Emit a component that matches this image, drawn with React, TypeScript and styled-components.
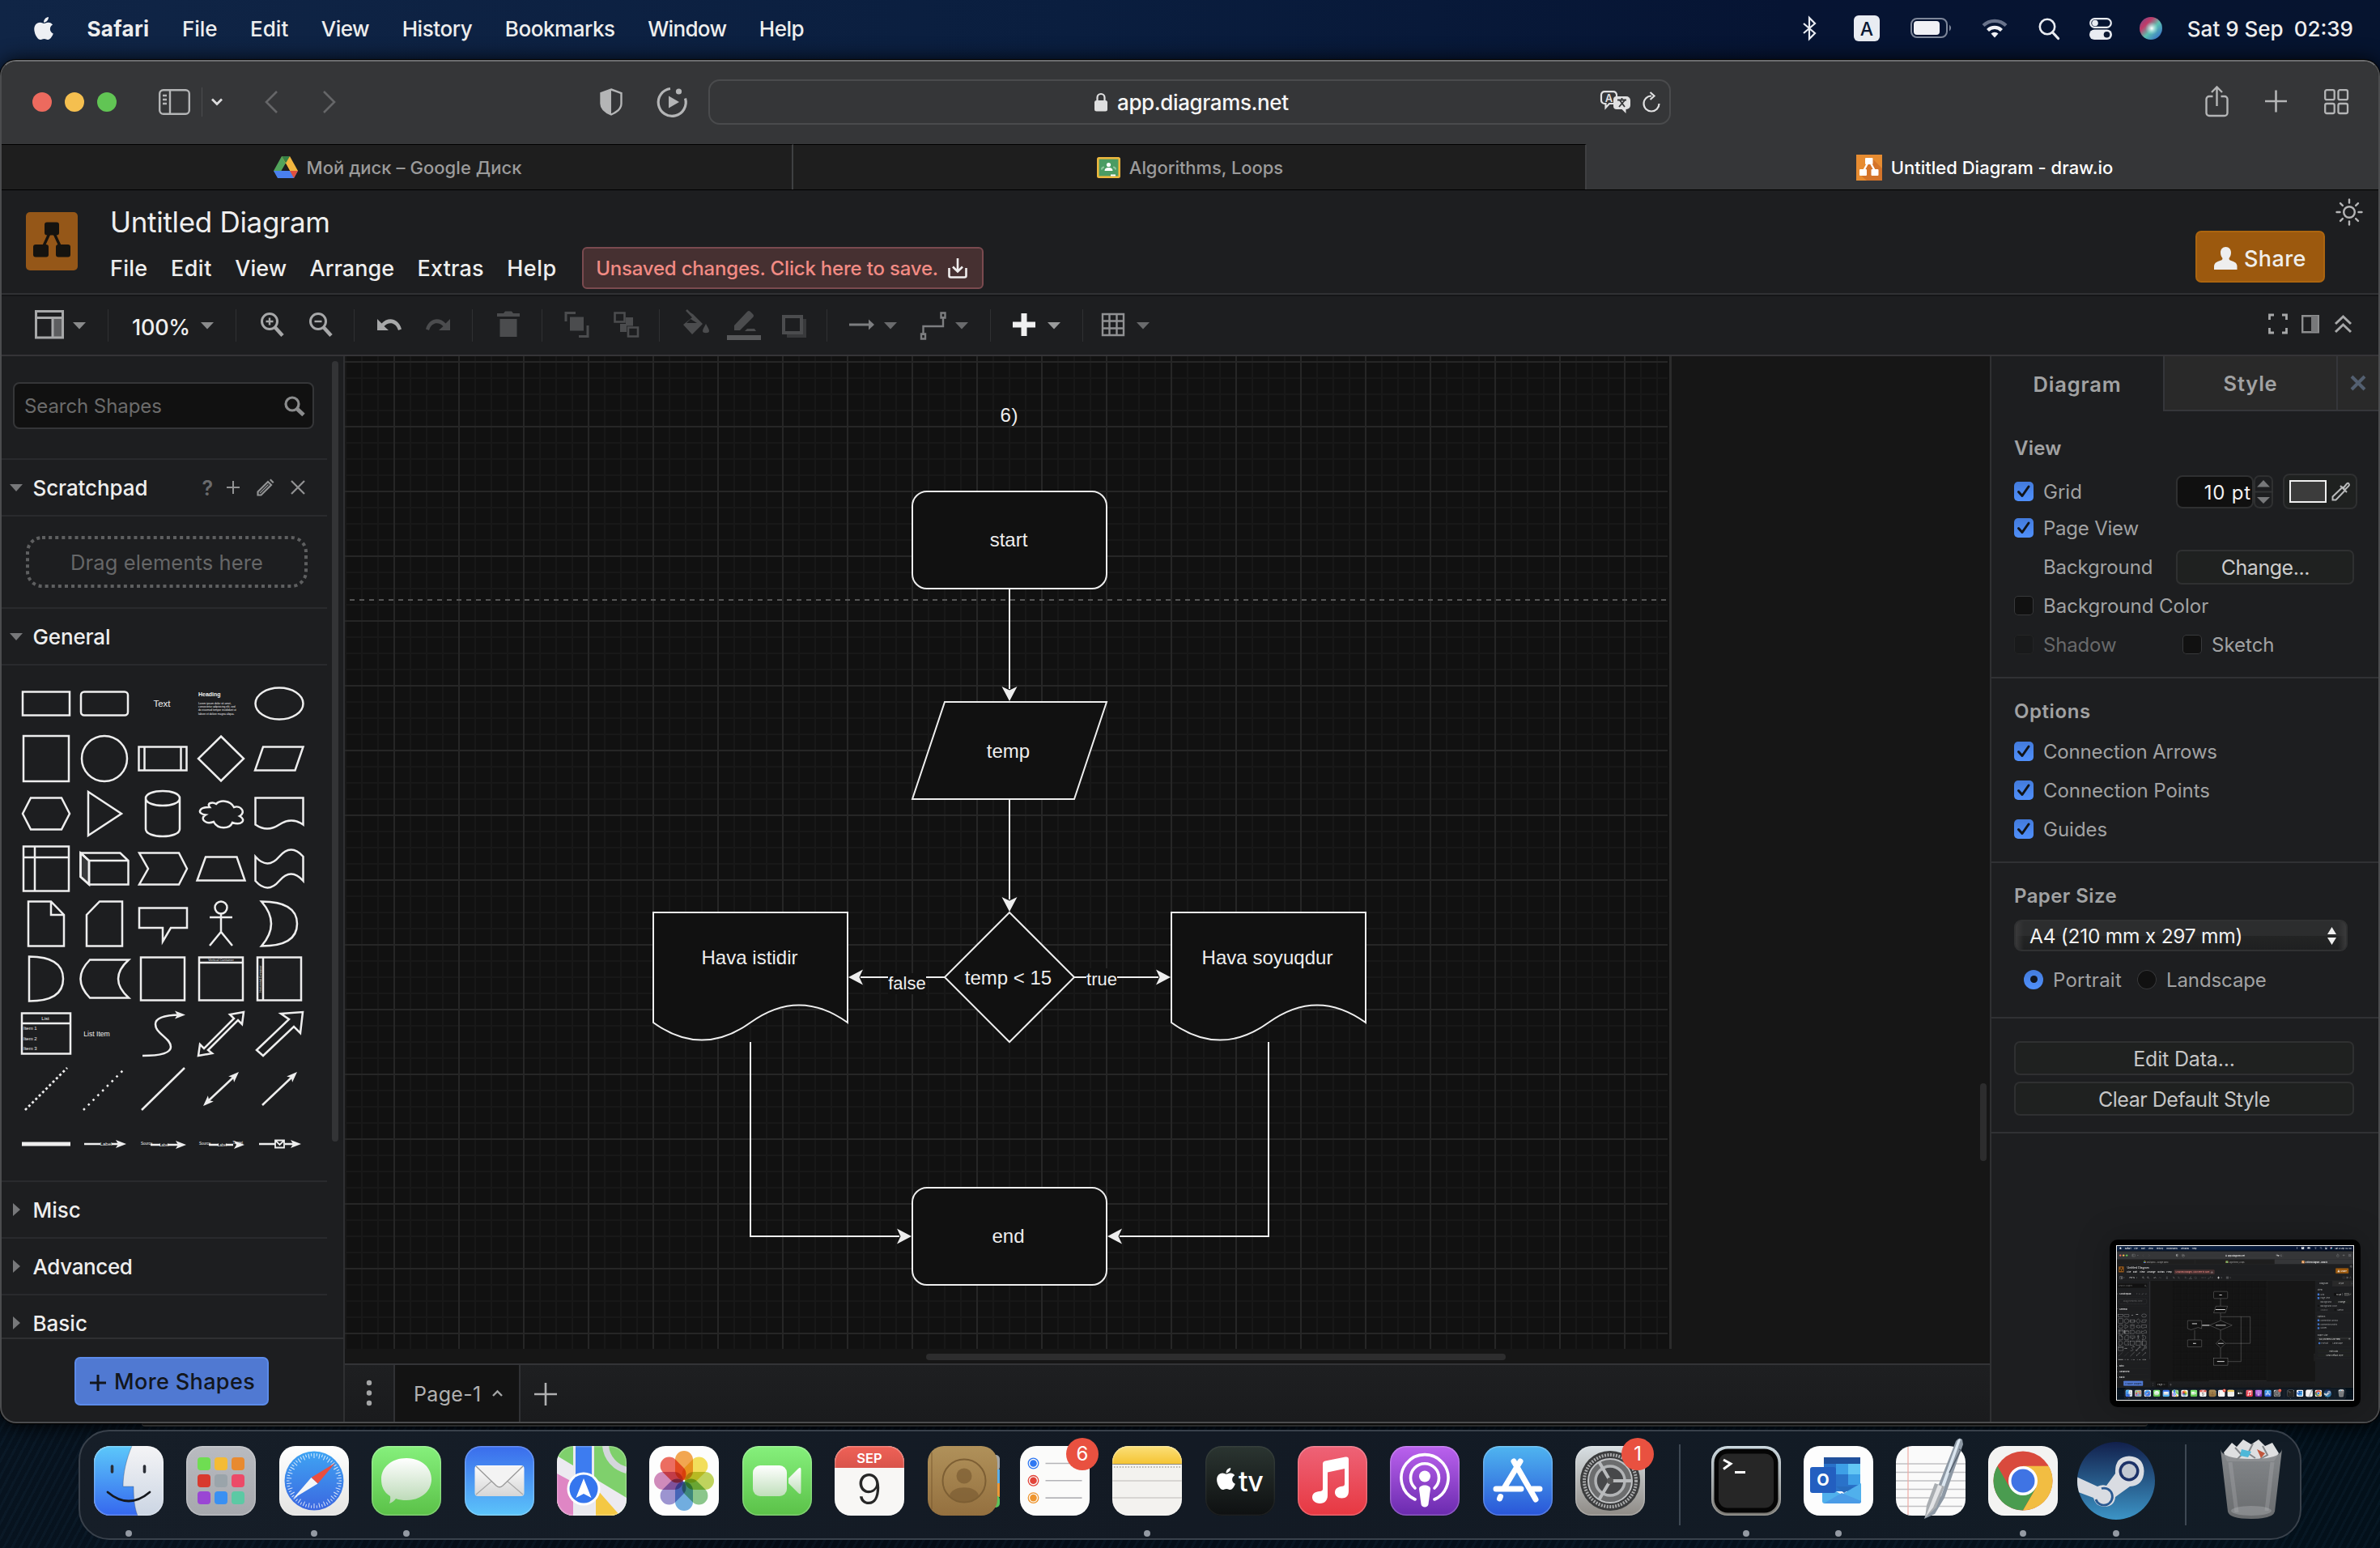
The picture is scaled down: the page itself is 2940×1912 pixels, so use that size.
import React, { useLayoutEffect, useRef } from "react";
import styled, { createGlobalStyle, css } from "styled-components";
import { FaApple } from "react-icons/fa";

const UI = `Inter, "Liberation Sans", sans-serif`;
const ARIAL = `"Liberation Sans", Arial, sans-serif`;
const INK = "#eeeeee";

const Global = createGlobalStyle`
  html, body { margin: 0; padding: 0; background: #03080f; overflow: hidden; }
  * { box-sizing: border-box; }
  svg { display: block; flex: none; overflow: visible; }
`;

/* ---------- text with tracking computed to a set width ---------- */

const LabelText = styled.span<{ $size: number; $color: string; $weight: number }>`
  display: inline-block;
  flex: none;
  white-space: pre;
  line-height: 1.2;
  padding-top: 2px;
  font-size: ${(p) => p.$size}px;
  font-weight: ${(p) => p.$weight};
  color: ${(p) => p.$color};
`;

function Label({ w, size = 26, color = INK, weight = 400, children }: {
  w: number; size?: number; color?: string; weight?: number; children: string;
}) {
  const ref = useRef<HTMLSpanElement>(null);
  useLayoutEffect(() => {
    const el = ref.current;
    if (!el) return;
    el.style.letterSpacing = "0px";
    el.style.letterSpacing = `${((w - el.offsetWidth) / children.length).toFixed(3)}px`;
  }, [w, children]);
  return <LabelText ref={ref} $size={size} $color={color} $weight={weight}>{children}</LabelText>;
}

const Slot = styled.div<{ $ml?: number; $auto?: boolean }>`
  flex: none;
  display: flex;
  align-items: center;
  margin-left: ${(p) => (p.$auto ? "auto" : `${p.$ml ?? 0}px`)};
`;

/* ---------- desktop ---------- */

const Screen = styled.div`
  position: relative;
  width: 2940px;
  height: 1912px;
  overflow: hidden;
  display: flex;
  flex-direction: column;
  font-family: ${UI};
  background:
    linear-gradient(90deg, #102546 0, #0a1e3f 45%, #061433 75%, #06142f 100%) top / 100% 110px no-repeat,
    repeating-linear-gradient(118deg, rgba(40, 80, 110, 0.1) 0 3px, transparent 3px 9px),
    linear-gradient(90deg, #07131f, #040a14 30%, #04101c 70%, #03101a);
`;

const MenuBarRoot = styled.div`
  height: 74px;
  flex: none;
  display: flex;
  align-items: center;
  padding: 0 33px 4px 38px;
`;
const MenuItems = styled.div`
  display: flex;
  gap: 40.5px;
  margin-left: 37.5px;
`;

function MenuBar() {
  const items: [string, number][] = [["File", 44], ["Edit", 47], ["View", 59], ["History", 87], ["Bookmarks", 136], ["Window", 97], ["Help", 55]];
  return (
    <MenuBarRoot>
      <FaApple size={32} color="#eef0f4" />
      <MenuItems>
        <Label w={77} weight={700}>Safari</Label>
        {items.map(([t, w]) => <Label key={t} w={w} weight={500}>{t}</Label>)}
      </MenuItems>
      <Slot $auto>
        <svg width="18" height="28" viewBox="0 0 18 28" fill="none" stroke="#e9ecf2" strokeWidth="2.2"><path d="M2 8l14 12-7 7V1l7 7L2 20" /></svg>
      </Slot>
      <Slot $ml={46}>
        <svg width="32" height="32" viewBox="0 0 32 32"><rect width="32" height="32" rx="6" fill="#e9ecf2" /><text x="16" y="24.500" fontSize="23" fontFamily="Inter" fontWeight="500" textAnchor="middle" fill="#0a1732">A</text></svg>
      </Slot>
      <Slot $ml={38}>
        <svg width="52" height="26" viewBox="0 0 52 26"><rect x="1" y="1" width="44" height="23" rx="7" fill="none" stroke="#7e879a" strokeWidth="2" /><rect x="4" y="4" width="32" height="17" rx="4" fill="#f0f1f5" /><path d="M48 8.500q4 4 0 8z" fill="#7e879a" /></svg>
      </Slot>
      <Slot $ml={36}>
        <svg width="32" height="26" viewBox="0 0 32 26" fill="none" strokeWidth="4.200">
          <path d="M2 9.500a20 20 0 0 1 28 0" stroke="#68728a" /><path d="M7.500 15.500a12 12 0 0 1 17 0" stroke="#f0f1f5" /><path d="M11.500 19.500a6.500 6.500 0 0 1 9 0L16 24.500z" fill="#f0f1f5" />
        </svg>
      </Slot>
      <Slot $ml={38}>
        <svg width="26" height="27" viewBox="0 0 26 27" fill="none" stroke="#e9ecf2" strokeWidth="2.600"><circle cx="11" cy="11" r="9.200" /><path d="M17.500 18l7 7.500" strokeWidth="3.200" strokeLinecap="round" /></svg>
      </Slot>
      <Slot $ml={37}>
        <svg width="28" height="27" viewBox="0 0 28 27"><rect x="1.200" y="1.200" width="25.600" height="10.600" rx="5.300" fill="none" stroke="#e9ecf2" strokeWidth="2.200" /><circle cx="7" cy="6.500" r="3.800" fill="#e9ecf2" /><rect y="14.500" width="28" height="12.500" rx="6.200" fill="#e9ecf2" /><circle cx="21.500" cy="20.700" r="3.800" fill="#0a1732" /></svg>
      </Slot>
      <Slot $ml={34}>
        <svg width="28" height="28" viewBox="0 0 28 28">
          <defs>
            <linearGradient id="siri" x1="0" y1="0" x2="1" y2="1"><stop offset="0" stopColor="#6b4a8c" /><stop offset=".3" stopColor="#c23a68" /><stop offset=".55" stopColor="#5cc1b0" /><stop offset="1" stopColor="#2d5bd0" /></linearGradient>
            <radialGradient id="siriGlow"><stop offset="0" stopColor="#fff" /><stop offset="1" stopColor="#9fe6e0" stopOpacity="0" /></radialGradient>
          </defs>
          <circle cx="14" cy="14" r="14" fill="url(#siri)" /><circle cx="15" cy="14" r="8" fill="url(#siriGlow)" />
        </svg>
      </Slot>
      <Slot $ml={31}><Label w={119} weight={500}>Sat 9 Sep</Label></Slot>
      <Slot $ml={13}><Label w={73} weight={500}>02:39</Label></Slot>
    </MenuBarRoot>
  );
}

/* ---------- browser window ---------- */

const BrowserWindow = styled.div`
  height: 1684px;
  flex: none;
  display: flex;
  flex-direction: column;
  border: 2px solid #4b4c4e;
  border-top-color: #6c6d6f;
  border-radius: 20px;
  overflow: hidden;
  background: #1d1e20;
  box-shadow: 0 0 0 1px #000, 0 2px 26px #000;
`;
const BackWindowEdge = styled.div`
  height: 4px;
  flex: none;
  margin: 0 287px 0 175px;
  background: #0c0c0c;
  border-bottom: 2px solid #2b2c2c;
  border-radius: 0 0 12px 12px;
`;
const BrowserBar = styled.div`
  height: 102px;
  flex: none;
  display: flex;
  align-items: center;
  padding-bottom: 2px;
  background: #353638;
`;
const Lights = styled.div`
  display: flex;
  gap: 16px;
  margin-left: 38px;
`;
const Light = styled.i<{ $c: string }>`
  width: 24px;
  height: 24px;
  border-radius: 50%;
  background: ${(p) => p.$c};
`;
const BarDivider = styled.i`
  width: 1px;
  height: 36px;
  margin-left: 14px;
  background: #4c4d4f;
`;
const AddressField = styled.div`
  width: 1189px;
  height: 56px;
  margin-left: 26px;
  padding: 0 11px 0 475px;
  display: flex;
  align-items: center;
  border: 2px solid #4a4b4d;
  border-radius: 14px;
`;
const TabStrip = styled.div`
  height: 57px;
  flex: none;
  display: grid;
  grid-template-columns: 978px 980px 1fr;
  border-bottom: 1px solid #000;
  background: #353638;
`;
const BrowserTab = styled.div<{ $active?: boolean }>`
  display: flex;
  align-items: center;
  justify-content: center;
  gap: 11px;
  ${(p) => p.$active
    ? css`padding: 1px 0 0 5px;`
    : css`background: #1e1e1e; border-top: 1px solid #000; border-right: 2px solid #3f4042; padding-left: 2px;`}
`;

function BrowserChrome() {
  const g = "#b4b5b6";
  return (
    <>
      <BrowserBar>
        <Lights><Light $c="#ed6a5e" /><Light $c="#f5bf4f" /><Light $c="#61c554" /></Lights>
        <Slot $ml={52}>
          <svg width="39" height="32" viewBox="0 0 39 32" fill="none" stroke={g} strokeWidth="2.400"><rect x="1.200" y="1.200" width="36.600" height="29.600" rx="4.500" /><path d="M14 1v30M5 8h5M5 13h5M5 18h5" /></svg>
        </Slot>
        <BarDivider />
        <Slot $ml={11}><svg width="14" height="10" viewBox="0 0 14 10" fill="none" stroke="#dcdcdd" strokeWidth="2.800"><path d="M1 1.500l6 6 6-6" /></svg></Slot>
        <Slot $ml={52}><svg width="16" height="28" viewBox="0 0 16 28" fill="none" stroke="#656668" strokeWidth="2.600"><path d="M15 1L2 14l13 13" /></svg></Slot>
        <Slot $ml={56}><svg width="16" height="28" viewBox="0 0 16 28" fill="none" stroke="#656668" strokeWidth="2.600"><path d="M1 1l13 13L1 27" /></svg></Slot>
        <Slot $ml={326}>
          <svg width="28" height="34" viewBox="0 0 28 34"><path d="M14 1.500L26.500 6v13c0 6-5.500 10.500-12.500 13.500C7 29.500 1.500 25 1.500 19V6z" fill="none" stroke={g} strokeWidth="2.400" /><path d="M14 1.500V32C7 29 1.500 25 1.500 19V6z" fill={g} /></svg>
        </Slot>
        <Slot $ml={42}>
          <svg width="38" height="38" viewBox="0 0 38 38" fill="none" stroke={g} strokeWidth="3.200"><path d="M17 2.500A17 17 0 1 0 35.500 14.500" /><path d="M15 11.500v15l13-7.500z" fill={g} stroke="none" /><circle cx="27.500" cy="6" r="3.600" fill={g} stroke="none" /></svg>
        </Slot>
        <AddressField>
          <svg width="16" height="24" viewBox="0 0 16 24"><path d="M3.500 11V6.500a4.500 4.500 0 0 1 9 0V11" fill="none" stroke="#dfdfe0" strokeWidth="2.200" /><rect y="10" width="16" height="13.500" rx="2.500" fill="#dfdfe0" /></svg>
          <Slot $ml={12}><Label w={212} weight={500} color="#f5f5f5">app.diagrams.net</Label></Slot>
          <Slot $auto>
            <svg width="38" height="29" viewBox="0 0 38 29">
              <path d="M5 1.200h11a4 4 0 0 1 4 4V12a4 4 0 0 1-4 4h-5l-4.500 5v-5H5a4 4 0 0 1-4-4V5.200a4 4 0 0 1 4-4z" fill="none" stroke="#e0e0e1" strokeWidth="2.200" />
              <text x="10.500" y="13.500" fontSize="13" fontWeight="600" fontFamily="Inter" fill="#e0e0e1" textAnchor="middle">A</text>
              <path d="M20 7h12a5 5 0 0 1 5 5v6a5 5 0 0 1-5 5h-.5v5l-5-5H20a4 4 0 0 1-4-4v-8a4 4 0 0 1 4-4z" fill="#e0e0e1" />
              <path d="M21 11.500h11M26.500 9v2.500M23 20l7-8M30 20l-6-8" stroke="#353638" strokeWidth="1.800" fill="none" />
            </svg>
          </Slot>
          <Slot $ml={13}><svg width="23" height="26" viewBox="0 0 23 26" fill="none" stroke="#e0e0e1" strokeWidth="2.200"><path d="M12 5.500A9.500 9.500 0 1 0 21.500 15" /><path d="M10.500 1l5 4.500-5 4.500" /></svg></Slot>
        </AddressField>
        <Slot $ml={660}>
          <svg width="29" height="42" viewBox="0 0 29 42" fill="none" stroke={g} strokeWidth="2.400"><path d="M9.500 14H5a3.500 3.500 0 0 0-3.500 3.500v17A3.500 3.500 0 0 0 5 38h19a3.500 3.500 0 0 0 3.500-3.500v-17A3.500 3.500 0 0 0 24 14h-4.500M14.500 26V3M8 9l6.500-6.500L21 9" /></svg>
        </Slot>
        <Slot $ml={45}><svg width="27" height="31" viewBox="0 0 27 31" stroke={g} strokeWidth="2.600"><path d="M0 14h27M13.500 .5v27" /></svg></Slot>
        <Slot $ml={46}>
          <svg width="31" height="33" viewBox="0 0 31 33" fill="none" stroke={g} strokeWidth="2.300"><rect x="1.200" y="1.200" width="11.500" height="12" rx="2" /><rect x="17.500" y="1.200" width="11.500" height="12" rx="2" /><rect x="1.200" y="18" width="11.500" height="12" rx="2" /><rect x="17.500" y="18" width="11.500" height="12" rx="2" /></svg>
        </Slot>
      </BrowserBar>
      <TabStrip>
        <BrowserTab>
          <svg width="30" height="27" viewBox="0 0 30 27"><path d="M10 0h10L10 17 5 26 0 18z" fill="#52a45b" /><path d="M10 0h10l10 18H20z" fill="#f2b63f" /><path d="M10 0h10l-5 8.500z" fill="#357f45" /><path d="M0 18h30l-5 9H5z" fill="#4a80ee" /><path d="M20 18h10l-5 9z" fill="#e0503f" /><path d="M15 9l5 9H10z" fill="#1e1e1e" /></svg>
          <Label w={266} size={22} weight={500} color="#9b9b9b">Мой диск – Google Диск</Label>
        </BrowserTab>
        <BrowserTab>
          <svg width="29" height="26" viewBox="0 0 29 26"><rect width="29" height="26" rx="2.500" fill="#edb73e" /><rect x="2.600" y="2.600" width="23.800" height="20.800" fill="#4b9c63" /><circle cx="14.500" cy="9.500" r="2.600" fill="#fff" /><path d="M9.500 17q0-4 5-4t5 4z" fill="#fff" /><path d="M6 15.500q0-3 3-3M23 15.500q0-3-3-3" stroke="#8fc79e" strokeWidth="2" fill="none" /><rect x="17" y="21.500" width="6" height="2" fill="#fff" /></svg>
          <Label w={190} size={22} weight={500} color="#9b9b9b">Algorithms, Loops</Label>
        </BrowserTab>
        <BrowserTab $active>
          <svg width="32" height="32" viewBox="0 0 32 32"><rect width="32" height="32" fill="#e78c31" /><path d="M20 5l12 12v15H13l-8-7z" fill="#d4742a" /><path d="M15.500 8L9 20M16.500 8L23 20" stroke="#fff" strokeWidth="2.400" /><rect x="11" y="4" width="9.500" height="8" rx="1" fill="#fff" /><rect x="4" y="18" width="9" height="8" rx="1" fill="#fff" /><rect x="18.500" y="18" width="9" height="8" rx="1" fill="#fff" /></svg>
          <Label w={275} size={22} weight={500} color="#ffffff">Untitled Diagram - draw.io</Label>
        </BrowserTab>
      </TabStrip>
    </>
  );
}

/* ---------- diagram editor header ---------- */

const Header = styled.div`
  height: 127px;
  flex: none;
  display: flex;
  align-items: flex-start;
`;
const Logo = styled.svg`margin: 27px 0 0 30px;`;
const HeaderColumn = styled.div`
  margin: 16px 0 0 40px;
`;
const TitleRow = styled.div`
  height: 44px;
  display: flex;
  align-items: center;
  padding-bottom: 1px;
`;
const HeaderMenu = styled.div`
  display: flex;
  align-items: center;
  height: 52px;
  margin-top: 10px;
  gap: 28.500px;
`;
const Unsaved = styled.div`
  width: 496px;
  height: 52px;
  margin-left: 3px;
  padding: 1px 18px 0 15px;
  display: flex;
  align-items: center;
  justify-content: space-between;
  border: 2px solid #7a4a4f;
  border-radius: 6px;
  background: #463031;
`;
const ShareButton = styled.div`
  width: 160px;
  height: 64px;
  margin: 50px 0 0 auto;
  display: flex;
  align-items: center;
  gap: 8px;
  padding: 4px 0 0 21px;
  border: 2px solid #ac650f;
  border-radius: 7px;
  background: #9c590e;
`;
const Sun = styled.svg`margin: 11px 20px 0 14px;`;

function EditorHeader() {
  const items: [string, number][] = [["File", 46], ["Edit", 51], ["View", 64], ["Arrange", 104], ["Extras", 82], ["Help", 61]];
  return (
    <Header>
      <Logo width="64" height="72" viewBox="0 0 64 72">
        <rect width="64" height="72" rx="5" fill="#955718" />
        <path d="M31 22L20 46M33 22l11 24" stroke="#15130f" strokeWidth="3.400" />
        <rect x="23" y="12.500" width="18" height="16" rx="3" fill="#15130f" /><rect x="9" y="40" width="19" height="15.500" rx="3" fill="#15130f" /><rect x="37" y="40" width="18" height="15.500" rx="3" fill="#15130f" />
      </Logo>
      <HeaderColumn>
        <TitleRow><Label w={272} size={35}>Untitled Diagram</Label></TitleRow>
        <HeaderMenu>
          {items.map(([t, w]) => <Label key={t} w={w} size={27} weight={450}>{t}</Label>)}
          <Unsaved>
            <Label w={423} size={24} weight={500} color="#f28b84">Unsaved changes. Click here to save.</Label>
            <svg width="24" height="26" viewBox="0 0 24 26" fill="none" stroke="#f0eeee" strokeWidth="2.600"><path d="M1.500 12v9.500a2 2 0 0 0 2 2h17a2 2 0 0 0 2-2V12M12 0v16M6 10.500l6 6 6-6" /></svg>
          </Unsaved>
        </HeaderMenu>
      </HeaderColumn>
      <ShareButton>
        <svg width="29" height="28" viewBox="0 0 29 28"><path d="M14.500 0c4 0 6.500 3 6.500 7 0 3-1 5-2.500 7 0 2 1 2.500 4 3.500 4 1.500 6 3 6 7V28H0v-3.500c0-4 2-5.500 6-7 3-1 4.500-1.500 4.500-3.500C9 12 8 10 8 7c0-4 2.500-7 6.500-7z" fill="#eeeeee" /></svg>
        <Label w={77} size={27} weight={550} color="#f0eeea">Share</Label>
      </ShareButton>
      <Sun width="32" height="32" viewBox="-16 -16 32 32" fill="none" stroke="#b5b5b6" strokeWidth="2.400">
        <circle r="6.800" />
        {[0, 45, 90, 135, 180, 225, 270, 315].map((a) => <path key={a} d="M11.500 0h4" transform={`rotate(${a})`} strokeLinecap="round" />)}
      </Sun>
    </Header>
  );
}

/* ---------- toolbar ---------- */

const ToolbarRoot = styled.div`
  height: 78px;
  flex: none;
  display: flex;
  align-items: center;
  border-top: 2px solid #303134;
  border-bottom: 2px solid #353437;
  box-shadow: inset 0 2px #151618;
  padding: 2px 33px 0 0;
`;
const ToolIcon = styled.svg<{ $ml: number }>`margin-left: ${(p) => p.$ml}px;`;
const Sep = styled.i<{ $ml: number }>`
  flex: none;
  width: 1px;
  height: 40px;
  margin-left: ${(p) => p.$ml}px;
  background: #2f3032;
`;
const ZoomLabel = styled.div`
  height: 38px;
  margin-left: 29px;
  padding-top: 4px;
  display: flex;
  align-items: center;
`;
const Tool = ({ ml, w, children }: { ml: number; w: number; children: React.ReactNode }) => (
  <ToolIcon $ml={ml} width={w} height="40" viewBox={`0 0 ${w} 40`} fill="none">{children}</ToolIcon>
);
const Caret = ({ ml, c = "#8a8b8c" }: { ml: number; c?: string }) => (
  <Tool ml={ml} w={16}><path d="M0 16h16l-8 8.500z" fill={c} /></Tool>
);

function Toolbar({ zoom }: { zoom: string }) {
  const on = "#a7a8a9", dim = "#4b4c4e", mid = "#7d7e80";
  return (
    <ToolbarRoot>
      <Tool ml={41} w={36}><g stroke={on} strokeWidth="3"><rect x="23" y="11" width="11" height="24" fill="#5d5e60" stroke="none" /><path d="M1.500 2.500h33v32.500h-33zM1.500 10.500h33M22 10.500V35" /></g></Tool>
      <Caret ml={11} />
      <Sep $ml={27} />
      <ZoomLabel><Label w={72} size={27} weight={450}>{zoom}</Label></ZoomLabel>
      <Caret ml={13} />
      <Sep $ml={27} />
      <Tool ml={29} w={30}><circle cx="12" cy="15" r="9.500" stroke={on} strokeWidth="3" /><path d="M12 10.500v9M7.500 15h9" stroke={on} strokeWidth="2.400" /><path d="M18.500 22l9.500 10.500" stroke={on} strokeWidth="4.500" /></Tool>
      <Tool ml={30} w={30}><circle cx="12" cy="15" r="9.500" stroke={on} strokeWidth="3" /><path d="M7.500 15h9" stroke={on} strokeWidth="2.400" /><path d="M18.500 22l9.500 10.500" stroke={on} strokeWidth="4.500" /></Tool>
      <Sep $ml={26} />
      <Tool ml={27} w={31}><path d="M1 12v14h14l-5.500-5C14 15.500 24 15 27 26l4-1.500C27 10.500 14 9 6.500 17.500z" fill={on} /></Tool>
      <Tool ml={30} w={31}><path transform="matrix(-1 0 0 1 31 0)" d="M1 12v14h14l-5.500-5C14 15.500 24 15 27 26l4-1.500C27 10.500 14 9 6.500 17.500z" fill={dim} /></Tool>
      <Sep $ml={26} />
      <Tool ml={30} w={28}><path d="M0 5h8l2-2.500h8L20 5h8v4H0zM3.500 12h21v22h-21z" fill={dim} /></Tool>
      <Sep $ml={27} />
      <Tool ml={27} w={31}><rect x="7" y="9.500" width="17" height="17" fill={dim} /><path d="M2 15V4.500h12M29 20v13.500H18" stroke={dim} strokeWidth="3" /></Tool>
      <Tool ml={30} w={31}><path d="M1.500 4.500h12v11h-12zM18 22.500h12v11H18z" stroke={dim} strokeWidth="2.600" /><path d="M15 10h9v10.500h-8V28H8V18h7z" fill={dim} /></Tool>
      <Sep $ml={25} />
      <Tool ml={28} w={33}><path d="M4 1l8 9L1 19l11 12 13-13L13 6" fill={dim} /><path d="M5 1l15 15" stroke={dim} strokeWidth="2.500" /><path d="M10 12l-5 5h13z" fill="#1d1e20" /><path d="M29 18c2 4 4 6 4 9s-8 3-8 0 2-5 4-9z" fill={dim} /></Tool>
      <Tool ml={22} w={42}><path d="M9 26v-6L25 3q2-2 4 0l3 3q2 2 0 4L16 26z" fill={dim} /><path d="M25 24h9l2 3H22z" fill={dim} /><rect y="32" width="42" height="6" fill="#58595b" /></Tool>
      <Tool ml={26} w={30}><path d="M25 12h5v23H6v-5h19z" fill="#38393b" /><path d="M2 9h22v20H2z" stroke={dim} strokeWidth="4" /></Tool>
      <Sep $ml={25} />
      <Tool ml={27} w={32}><path d="M0 19h27" stroke={mid} strokeWidth="3" /><path d="M24 12.500l7 6.500-7 6.500z" fill={mid} /></Tool>
      <Caret ml={11} c="#6a6b6d" />
      <Tool ml={29} w={31}><path d="M3.500 32V21h24.500V9M1 30.500h5v6H1zM25.500 4.500h5v6h-5z" stroke={mid} strokeWidth="2.400" /></Tool>
      <Caret ml={12} c="#6a6b6d" />
      <Sep $ml={27} />
      <Tool ml={27} w={28}><path d="M0 19h28M14 5v28" stroke="#f0f0f0" strokeWidth="7" /></Tool>
      <Caret ml={15} c="#9a9b9c" />
      <Sep $ml={27} />
      <Tool ml={23} w={28}><path d="M1 6h26v26H1zM9.500 6v26M18.500 6v26M1 14.500h26M1 23.500h26" stroke="#909193" strokeWidth="2.400" /></Tool>
      <Caret ml={15} c="#6a6b6d" />
      <Slot $auto>
        <Tool ml={0} w={24}><path d="M1.500 13V7H7M17 7h5.500v6M22.500 23v6H17M7 29H1.500v-6" stroke={on} strokeWidth="2.800" /></Tool>
        <Tool ml={17} w={22}><path d="M1.200 8.200h19.600v20H1.200z" stroke="#8d8e8f" strokeWidth="2.400" /><rect x="12" y="8" width="8" height="20" fill="#77787a" /></Tool>
        <Tool ml={19} w={21}><path d="M1 18l9.500-9 9.500 9M1 28l9.500-9 9.500 9" stroke={on} strokeWidth="3" /></Tool>
      </Slot>
    </ToolbarRoot>
  );
}

/* ---------- shape palette ---------- */

const Sidebar = styled.div`
  width: 424px;
  flex: none;
  border-right: 2px solid #2f3032;
  display: flex;
  flex-direction: column;
`;
const SidebarScroll = styled.div`
  height: 1212px;
  flex: none;
  overflow: hidden;
  display: flex;
  align-items: flex-start;
`;
const SidebarContent = styled.div`width: 402px; flex: none;`;
const SidebarThumb = styled.div`
  width: 8px;
  height: 964px;
  margin: 6px 0 0 6px;
  border-radius: 4px;
  background: #333436;
`;
const SearchBox = styled.div`
  width: 372px;
  height: 58px;
  margin: 32px 0 36px 14px;
  padding: 0 10px 0 12px;
  display: flex;
  align-items: center;
  justify-content: space-between;
  border: 2px solid #353638;
  border-radius: 8px;
  background: #111111;
`;
const SectionHead = styled.div`
  height: 70px;
  display: flex;
  align-items: center;
  border-top: 2px solid #292a2d;
`;
const ScratchArea = styled.div`
  height: 114px;
  border-top: 2px solid #292a2d;
  padding: 24px 0 0 30px;
`;
const DropBox = styled.div`
  width: 348px;
  height: 64px;
  display: grid;
  place-items: center;
  > * { grid-area: 1 / 1; }
`;
const Palette = styled.div`
  border-top: 2px solid #292a2d;
  padding: 13px 0 11px 19px;
  display: grid;
  grid-template-columns: repeat(5, 72px);
  grid-auto-rows: 68px;
`;
const SidebarFooter = styled.div`
  flex: 1;
  border-top: 2px solid #2f3032;
  padding: 22px 0 0 90px;
`;
const MoreShapes = styled.div`
  width: 240px;
  height: 60px;
  display: flex;
  align-items: center;
  gap: 10px;
  padding: 1px 0 0 17px;
  border: 2px solid #5c8bea;
  border-radius: 7px;
  background: #5079d2;
`;

const tiny = { fill: INK, stroke: "none", fontFamily: ARIAL } as const;
const Head = ({ x, y, a = 0 }: { x: number; y: number; a?: number }) => (
  <path d="M0 0L-13 5l3-5-3-5z" fill={INK} stroke="none" transform={`translate(${x} ${y}) rotate(${a})`} />
);

const shapes: React.ReactNode[] = [
  <rect x="-29" y="-14.500" width="58" height="29" />,
  <rect x="-29" y="-14.500" width="58" height="29" rx="4" />,
  <text {...tiny} fontSize="11.500" textAnchor="middle" x="-1" y="4">Text</text>,
  <g {...tiny}><text x="-28" y="-9" fontSize="7" fontWeight="700">Heading</text><g fontSize="3.300"><text x="-28" y="1">Lorem ipsum dolor sit amet,</text><text x="-28" y="5.200">consectetur adipisicing elit, sed</text><text x="-28" y="9.400">do eiusmod tempor incididunt ut</text><text x="-28" y="13.600">labore et dolore magna aliqua.</text></g></g>,
  <ellipse rx="29.500" ry="19.500" />,

  <rect x="-28" y="-28" width="56" height="56" />,
  <circle r="28" />,
  <path d="M-29.500-14.500h59v29h-59zM-22.500-14.500v29M22.500-14.500v29" />,
  <path d="M0-27.500L28 0 0 27.500-28 0z" />,
  <path d="M-20-14.500h49.500l-10 29h-49.500z" />,

  <path d="M-19-19.500h38L29 0 19 19.500h-38L-29 0z" />,
  <path d="M-20-27L21 0l-41 27z" />,
  <path d="M-21-19v38c0 12 42 12 42 0v-38c0-12-42-12-42 0c0 12 42 12 42 0" />,
  <path d="M-14-8c-14 0-16 8-5 9.500C-27 6-19 14-9 10c5 10 20 9 23 1 11 4 18-3 9-8C31-1 25-11 16-8 11-17-1-17-6-12c-5-3-12-1-8 4z" />,
  <path d="M-29.500-19.500h59v33q-14.500-10-29.500 0t-29.500 0z" />,

  <path d="M-28-27.500h56v55h-56zM-28-14h56M-14-27.500v55" />,
  <g><path d="M-29.500-19.500L-19-10v29.500L-29.500 10z" fill="#38393b" /><path d="M-29.500-19.500h49L29.500-10v29.500H-19L-29.500 10zM-19 19.500V-10h48.500M-19-10l-10.500-9.500" /></g>,
  <path d="M-29-19.500h49L30 0 20 19.500h-49L-18 0z" />,
  <path d="M-19-14.500h38.500l10 29h-59z" />,
  <path d="M-29.500-15q15 17 29.500 0t29.500 0v30q-15-17-29.500 0t-29.500 0z" />,

  <path d="M-22-27.500H6L22-11v38.500h-44zM6-27.500V-11h16" />,
  <path d="M-6-27.500h28v55h-44V-11z" />,
  <path d="M-29-19.500h59V5H10L0 22V5h-29z" />,
  <g><circle cy="-20" r="7.500" /><path d="M0-12.500V10M-14-8h28M-14 27L0 10l14 17" /></g>,
  <path d="M-22-27.500Q22-27.500 22 0T-22 27.500Q2 0-22-27.500z" />,

  <path d="M-21-27.500Q21-27.500 21 0T-21 27.500z" />,
  <path d="M-18-23.500h48q-26 23.500 0 47h-48q-23-23.500 0-47z" />,
  <rect x="-27" y="-26.500" width="54" height="53" />,
  <g><path d="M-27-26.500h54v53h-54zM-27-20h54" /><text {...tiny} fontSize="4" textAnchor="middle" y="-21.800">Vertical Container</text></g>,
  <g><path d="M-27-26.500h54v53h-54zM-20-26.500v53" /><text {...tiny} fontSize="3.600" textAnchor="middle" transform="translate(-22 0) rotate(-90)">Horizontal Container</text></g>,

  <g><path d="M-30-25.500h60v50h-60zM-30-13h60" /><g {...tiny} fontSize="6"><text x="-1" y="-17.500" textAnchor="middle">List</text><text x="-28" y="-5">Item 1</text><text x="-28" y="7.500">Item 2</text><text x="-28" y="20">Item 3</text></g></g>,
  <text {...tiny} x="-9.500" y="3" fontSize="8.600" textAnchor="middle">List Item</text>,
  <g><path d="M-25 27q35 0 35-11C10 5-9 0-9-12q0-11 30-11.500" /><Head x={28} y={-23.500} /></g>,
  <path d="M-28 27l2-14 5 5 37-37-5-5 17-3-2 15-5-5-37 37 5 4z" />,
  <path d="M-28 20L12-18l-10-7 27-2-3 26-8-8-38 36z" />,

  <path d="M-26 26L26-26" strokeDasharray="3 3" strokeWidth="2.800" />,
  <path d="M-26 26L24-24" strokeDasharray="2.600 5.600" strokeWidth="2.600" />,
  <path d="M-26 26L27-26" />,
  <g><path d="M-16 15l32-30" /><Head x={22} y={-21} a={-44} /><Head x={-22} y={21} a={136} /></g>,
  <g><path d="M-21 20l37-35" /><Head x={22} y={-21} a={-44} /></g>,

  <path d="M-30 0h60" strokeWidth="5" />,
  <g><path d="M-25 0h20M9 0h10" /><Head x={27} y={0} /><text {...tiny} x="2" y="2" fontSize="6" textAnchor="middle">Label</text></g>,
  <g><path d="M-15 1h12M6 1h13" /><Head x={29} y={1} /><text {...tiny} x="-27" y="1" fontSize="4.500">Source</text><text {...tiny} x="1.500" y="3" fontSize="4.500" textAnchor="middle">Label</text></g>,
  <g><path d="M-15 1h12M6 1h9" /><Head x={29} y={1} /><text {...tiny} x="-27" y="1" fontSize="4.500">Source</text><text {...tiny} x="1.500" y="3" fontSize="4.500" textAnchor="middle">Label</text><text {...tiny} x="27" y="0" fontSize="4.500" textAnchor="end">Target</text></g>,
  <g><path d="M-25 0h20M7 0h12" /><Head x={27} y={0} /><path d="M-5-4.500H6v9H-5zM-4-3.500L.5 1 5-3.500" strokeWidth="1.800" /></g>,
];

const Tri = ({ open }: { open?: boolean }) => (
  <Slot $ml={open ? 10 : 14}>
    <svg width={open ? 16 : 9} height={open ? 9 : 16} viewBox={open ? "0 0 16 9" : "0 0 9 16"}><path d={open ? "M0 0h16L8 9z" : "M0 0l9 8-9 8z"} fill="#77787a" /></svg>
  </Slot>
);

function ShapePanel() {
  return (
    <Sidebar>
      <SidebarScroll>
        <SidebarContent>
          <SearchBox>
            <Label w={170} size={24} color="#6b6b6b">Search Shapes</Label>
            <svg width="25" height="25" viewBox="0 0 25 25" fill="none" stroke="#8b8c8d" strokeWidth="3.200"><circle cx="10" cy="10" r="8" /><path d="M16 16l8 7.500" strokeWidth="5" /></svg>
          </SearchBox>
          <SectionHead>
            <Tri open />
            <Slot $ml={12.500}><Label w={142} weight={550}>Scratchpad</Label></Slot>
            <Slot $ml={67}><Label w={15} size={25} weight={600} color="#6a6b6d">?</Label></Slot>
            <Slot $ml={15.500}><svg width="16" height="16" viewBox="0 0 16 16" stroke="#929394" strokeWidth="2"><path d="M0 8h16M8 0v16" /></svg></Slot>
            <Slot $ml={21}><svg width="22" height="22" viewBox="0 0 22 22" fill="none" stroke="#929394" strokeWidth="2.200"><path d="M1.500 20.500v-4L14 4l4 4L5.500 20.500z" /><path d="M16 2l1.500-1.500 4 4L20 6z" fill="#929394" stroke="none" /><path d="M4 18L14.500 7.500" strokeWidth="1.200" /></svg></Slot>
            <Slot $ml={21}><svg width="16" height="16" viewBox="0 0 16 16" stroke="#929394" strokeWidth="2.200"><path d="M0 0l16 16M16 0L0 16" /></svg></Slot>
          </SectionHead>
          <ScratchArea>
            <DropBox>
              <svg width="348" height="64" viewBox="0 0 348 64"><rect x="2" y="2" width="344" height="60" rx="18" fill="none" stroke="#5e5f60" strokeWidth="4" strokeDasharray="4.050 4.050" /></svg>
              <Label w={238} size={25.500} color="#666768">Drag elements here</Label>
            </DropBox>
          </ScratchArea>
          <SectionHead><Tri open /><Slot $ml={12.500}><Label w={96} weight={550}>General</Label></Slot></SectionHead>
          <Palette>
            {shapes.map((s, i) => <svg key={i} width="72" height="68" viewBox="-36 -34 72 68" fill="none" stroke={INK} strokeWidth="2.500">{s}</svg>)}
          </Palette>
          {([["Misc", 59], ["Advanced", 123], ["Basic", 67]] as [string, number][]).map(([t, w]) => (
            <SectionHead key={t}><Tri /><Slot $ml={15.500}><Label w={w} weight={550}>{t}</Label></Slot></SectionHead>
          ))}
        </SidebarContent>
        <SidebarThumb />
      </SidebarScroll>
      <SidebarFooter>
        <MoreShapes>
          <svg width="20" height="20" viewBox="0 0 20 20" stroke="#12161d" strokeWidth="3"><path d="M0 11h20M10 1v20" /></svg>
          <Label w={174} size={27} weight={550} color="#12161d">More Shapes</Label>
        </MoreShapes>
      </SidebarFooter>
    </Sidebar>
  );
}

/* ---------- canvas ---------- */

const CanvasColumn = styled.div`
  width: 2032px;
  flex: none;
  display: flex;
  flex-direction: column;
`;
const CanvasArea = styled.div`
  position: relative;
  height: 1244px;
  flex: none;
  overflow: hidden;
  background: #161616;
`;
const ScrollThumb = styled.div<{ $v?: boolean }>`
  position: absolute;
  border-radius: 4px;
  background: #2d2d2e;
  ${(p) => (p.$v ? css`width: 8px; height: 96px; right: 4px; top: 898px;` : css`width: 716px; height: 8px; left: 718px; bottom: 4px;`)}
`;
const PageTabs = styled.div`
  flex: 1;
  display: flex;
  align-items: center;
  border-top: 2px solid #333437;
  background: linear-gradient(#1e1f21, #1a1b1d);
`;
const PageTab = styled.div`
  width: 157px;
  height: 100%;
  margin-left: 25px;
  display: flex;
  align-items: center;
  padding-left: 23px;
  gap: 13px;
  border-left: 2px solid #303134;
  border-right: 2px solid #303134;
  background: #131313;
`;

const Arrow = ({ x, y, a }: { x: number; y: number; a: number }) => (
  <path d="M0 0L-18 9.500l4.500-9.500-4.500-9.500z" fill={INK} stroke="none" transform={`translate(${x} ${y}) rotate(${a})`} />
);
const docPath = (x: number, y: number) =>
  `M${x} ${y}h240v136q-60 -43.200 -120 0t-120 0z`;

function Flowchart() {
  return (
    <>
      <path d="M432 741H2060" stroke="#555555" strokeWidth="2" strokeDasharray="6 6" />
      <g fill="#111111" stroke={INK} strokeWidth="2">
        <rect x="1127" y="607" width="240" height="120" rx="18" />
        <path d="M1167 867h200l-40 120h-200z" />
        <path d="M1247 1127l80 80-80 80-80-80z" />
        <path d={docPath(807, 1127)} /><path d={docPath(1447, 1127)} />
        <rect x="1127" y="1467" width="240" height="120" rx="18" />
      </g>
      <g fill="none" stroke={INK} strokeWidth="2">
        <path d="M1247 727v124M1247 987v124M1167 1207h-104M1327 1207h104M927 1287v240h184M1567 1287v240h-184" />
        <Arrow x={1247} y={866} a={90} /><Arrow x={1247} y={1126} a={90} />
        <Arrow x={1048} y={1207} a={180} /><Arrow x={1446} y={1207} a={0} />
        <Arrow x={1126} y={1527} a={0} /><Arrow x={1368} y={1527} a={180} />
      </g>
      <rect x="1097" y="1202" width="47" height="26" fill="#111111" /><rect x="1342" y="1196" width="38" height="26" fill="#111111" />
      <g fill={INK} fontFamily={ARIAL} fontSize="24" textAnchor="middle">
        <text x="1246.500" y="521" textLength="22">6)</text>
        <text x="1246" y="675">start</text>
        <text x="1245.500" y="935.500">temp</text>
        <text x="1245.500" y="1215.500">temp &lt; 15</text>
        <text x="926" y="1191" textLength="119">Hava istidir</text>
        <text x="1565.500" y="1191" textLength="162">Hava soyuqdur</text>
        <text x="1245.500" y="1535">end</text>
        <g fontSize="22"><text x="1120.500" y="1222">false</text><text x="1361" y="1216.500">true</text></g>
      </g>
    </>
  );
}

function LoopChart() {
  return (
    <g fill="#111111" stroke="#b9b9b9" strokeWidth="3">
      <path d="M1290 658v95M1290 836v95M1290 1048v108M1290 1269v125M1153 990h-96M970 1048v121M1353 1212h304V883H1290M1380 1437h163V883" fill="none" />
      <rect x="1205" y="572" width="172" height="86" rx="12" /><path d="M1233 753h144l-28 83h-144z" />
      <path d="M1293 931l140 58-140 59-140-59z" /><path d="M883 931h174v99q-44-30-87 0t-87 0z" />
      <rect x="883" y="1169" width="174" height="87" rx="4" /><path d="M1293 1156l60 57-60 56-60-56z" /><rect x="1205" y="1394" width="175" height="87" />
      <g fill={INK} stroke="none"><rect x="1275" y="610" width="32" height="9" /><rect x="1228" y="790" width="120" height="9" /><rect x="1230" y="985" width="125" height="8" /><rect x="938" y="965" width="62" height="9" /><rect x="950" y="1208" width="38" height="9" /><rect x="1258" y="1208" width="70" height="8" /><rect x="1248" y="1432" width="90" height="9" /><rect x="1062" y="985" width="90" height="9" /></g>
    </g>
  );
}

function Canvas({ mini }: { mini?: boolean }) {
  const px = mini ? 703 : 426, pw = mini ? 1160 : 1634;
  return (
    <CanvasColumn>
      <CanvasArea>
        <svg width="2032" height="1244" viewBox="426 440 2032 1244">
          <defs>
            <pattern id="grid" patternUnits="userSpaceOnUse" x="6" y="46" width="80" height="80">
              <path d="M21 0v80M41 0v80M61 0v80M0 21h80M0 41h80M0 61h80" stroke="#181818" strokeWidth="2" />
              <path d="M1 0v80M0 1h80" stroke="#262626" strokeWidth="2" />
            </pattern>
          </defs>
          <rect x={px} y="440" width={pw + 2} height="1226" fill="#111111" />
          <rect x={px} y="440" width={pw} height="1226" fill="url(#grid)" />
          <rect x={px + pw + 2} y="440" width="3" height="1226" fill="#2b2b2b" />
          {mini ? <LoopChart /> : <Flowchart />}
        </svg>
        <ScrollThumb /><ScrollThumb $v />
      </CanvasArea>
      <PageTabs>
        <Slot $ml={27}><svg width="8" height="34" viewBox="0 0 8 34" fill="#a4a5a6"><circle cx="3" cy="4" r="3.200" /><circle cx="3" cy="16.500" r="3.200" /><circle cx="3" cy="29" r="3.200" /></svg></Slot>
        <PageTab>
          <Label w={84} size={25} color="#b0b0b1">Page-1</Label>
          <svg width="13" height="8" viewBox="0 0 13 8" fill="none" stroke="#a4a5a6" strokeWidth="2.400"><path d="M1 7l5.500-5.500L12 7" /></svg>
        </PageTab>
        <Slot $ml={17}><svg width="28" height="28" viewBox="0 0 28 28" stroke="#b0b0b1" strokeWidth="2.600"><path d="M0 15h28M14 1v28" /></svg></Slot>
      </PageTabs>
    </CanvasColumn>
  );
}

/* ---------- format panel ---------- */

const FormatRoot = styled.div`
  flex: 1;
  border-left: 2px solid #2f3032;
  background: #1d1e20;
`;
const FormatTabs = styled.div`
  height: 68px;
  display: grid;
  grid-template-columns: 212px 214px 1fr;
`;
const FormatTab = styled.div<{ $active?: boolean }>`
  display: flex;
  align-items: center;
  justify-content: center;
  ${(p) => (p.$active ? css`padding-top: 1px;` : css`background: #292929; border-left: 2px solid #35363a; border-bottom: 2px solid #35363a;`)}
`;
const Section = styled.div<{ $pt: number; $pb: number }>`
  padding: ${(p) => p.$pt}px 0 ${(p) => p.$pb}px 28px;
  border-bottom: 2px solid #303134;
`;
const SectionTitle = styled.div<{ $mb: number }>`
  height: 40px;
  display: flex;
  align-items: center;
  margin-bottom: ${(p) => p.$mb}px;
`;
const Row = styled.div<{ $h: number }>`
  height: ${(p) => p.$h}px;
  display: flex;
  align-items: center;
`;
const CheckBox = styled.div<{ $on?: boolean; $dim?: boolean; $round?: boolean }>`
  width: 24px;
  height: 24px;
  flex: none;
  margin-right: 12px;
  display: grid;
  place-items: center;
  border-radius: ${(p) => (p.$round ? "50%" : "5px")};
  background: ${(p) => (p.$on ? "linear-gradient(#437bdc, #5090fb)" : p.$dim ? "#191a1b" : "#111111")};
  box-shadow: ${(p) => (p.$on ? "none" : `inset 0 0 0 1px ${p.$dim ? "#242526" : "#38393b"}`)};
`;
const RadioDot = styled.i`
  width: 9px;
  height: 9px;
  border-radius: 50%;
  background: #10151f;
`;
const FieldColumn = styled.div`
  display: flex;
  align-items: center;
  width: 172px;
`;
const Button = styled.div<{ $w: number; $h: number; $mb?: number }>`
  width: ${(p) => p.$w}px;
  height: ${(p) => p.$h}px;
  margin-bottom: ${(p) => p.$mb ?? 0}px;
  display: flex;
  align-items: center;
  justify-content: center;
  border: 2px solid #2f3031;
  border-radius: 7px;
  background: #1f2120;
`;
const NumberField = styled.div`
  width: 96px;
  height: 41px;
  display: flex;
  align-items: center;
  justify-content: flex-end;
  padding: 2px 1px 0 0;
  border: 2px solid #2f3031;
  border-radius: 8px;
  background: #101010;
`;
const ColorButton = styled.div`
  width: 92px;
  height: 44px;
  margin-left: 12px;
  padding-left: 6px;
  display: flex;
  align-items: center;
  gap: 6px;
  border: 2px solid #2f3031;
  border-radius: 8px;
  background: #1f2120;
`;
const Swatch = styled.div`
  width: 46px;
  height: 28px;
  border: 2px solid #f0f0f0;
  background: #3c3c3c;
`;
const Select = styled.div`
  width: 412px;
  height: 39px;
  display: flex;
  align-items: center;
  justify-content: space-between;
  padding: 0 12px 0 17px;
  border: 2px solid #303132;
  border-radius: 9px;
  background: linear-gradient(90deg, #3a3a3b, transparent 10px, transparent calc(100% - 10px), #3a3a3b), linear-gradient(#2c2d2e 50%, #232424 52%, #1f2021);
`;

const gray = "#a1a2a3";
const Check = ({ on, dim }: { on?: boolean; dim?: boolean }) => (
  <CheckBox $on={on} $dim={dim}>
    {on && <svg width="16" height="16" viewBox="0 0 16 16" fill="none" stroke="#111418" strokeWidth="3" strokeLinecap="round" strokeLinejoin="round"><path d="M1.500 8.500L6 13.500 14 2" /></svg>}
  </CheckBox>
);

function FormatPanel() {
  return (
    <FormatRoot>
      <FormatTabs>
        <FormatTab $active><Label w={109} size={25.500} weight={600} color={gray}>Diagram</Label></FormatTab>
        <FormatTab><Label w={67} size={25.500} weight={600} color={gray}>Style</Label></FormatTab>
        <FormatTab><svg width="18" height="18" viewBox="0 0 18 18" stroke="#535f70" strokeWidth="4"><path d="M1 1l16 16M17 1L1 17" /></svg></FormatTab>
      </FormatTabs>
      <Section $pt={25} $pb={13}>
        <SectionTitle $mb={10}><Label w={59} size={24} weight={600} color={gray}>View</Label></SectionTitle>
        <Row $h={48}>
          <FieldColumn><Check on /><Label w={48} size={24} color={gray}>Grid</Label></FieldColumn>
          <Slot $ml={28}>
            <NumberField><Label w={58} size={24} color="#f2f2f2">10 pt</Label></NumberField>
            <svg width="24" height="41" viewBox="0 0 24 41">
              <rect x="1" y="1" width="22" height="39" rx="6" fill="none" stroke="#2f3031" strokeWidth="2" /><path d="M0 20.500h24" stroke="#333435" strokeWidth="2" /><path d="M4 14.500L12 6l8 8.500zM4 27l8 8 8-8z" fill="#77787a" />
            </svg>
            <ColorButton>
              <Swatch />
              <svg width="23" height="24" viewBox="0 0 23 24" fill="none" stroke="#b8b9ba" strokeWidth="2"><path d="M1.500 22.500v-4L13.500 7l3.500 3.500L5.500 22.500zM11 5l8 8M14.500 8L19 2.500q1.500-1.500 2.500 0t0 2.500L16.500 10" /></svg>
            </ColorButton>
          </Slot>
        </Row>
        <Row $h={42}><Check on /><Label w={118} size={24} color={gray}>Page View</Label></Row>
        <Row $h={54}>
          <Slot $ml={36}><Label w={135} size={24} color={gray}>Background</Label></Slot>
          <Slot $ml={29}><Button $w={220} $h={43}><Label w={109} size={25} color="#cccccc">Change...</Label></Button></Slot>
        </Row>
        <Row $h={42}><Check /><Label w={204} size={24} color={gray}>Background Color</Label></Row>
        <Row $h={54}>
          <FieldColumn><Check dim /><Label w={90} size={24} color="#68696a">Shadow</Label></FieldColumn>
          <Slot $ml={36}><Check /><Label w={78} size={24} color={gray}>Sketch</Label></Slot>
        </Row>
      </Section>
      <Section $pt={20} $pb={16}>
        <SectionTitle $mb={6}><Label w={95} size={24} weight={600} color={gray}>Options</Label></SectionTitle>
        {([["Connection Arrows", 215], ["Connection Points", 206], ["Guides", 79]] as [string, number][]).map(([t, w]) => (
          <Row key={t} $h={48}><Check on /><Label w={w} size={24} color={gray}>{t}</Label></Row>
        ))}
      </Section>
      <Section $pt={20} $pb={11}>
        <SectionTitle $mb={10}><Label w={127} size={24} weight={600} color={gray}>Paper Size</Label></SectionTitle>
        <Select>
          <Label w={263} size={24.500} color="#f2f2f2">A4 (210 mm x 297 mm)</Label>
          <svg width="11" height="22" viewBox="0 0 11 22" fill="#eeeeee"><path d="M5.500 0L11 9H0zM5.500 22L0 13h11z" /></svg>
        </Select>
        <Row $h={70}>
          <Slot $ml={12}><CheckBox $on $round><RadioDot /></CheckBox><Label w={85} size={24} color={gray}>Portrait</Label></Slot>
          <Slot $ml={19}><CheckBox $round /><Label w={124} size={24} color={gray}>Landscape</Label></Slot>
        </Row>
      </Section>
      <Section $pt={28} $pb={20}>
        <Button $w={420} $h={42} $mb={8}><Label w={126} size={25} color="#c6c6c6">Edit Data...</Label></Button>
        <Button $w={420} $h={42}><Label w={212} size={25} color="#c6c6c6">Clear Default Style</Label></Button>
      </Section>
    </FormatRoot>
  );
}

/* ---------- dock ---------- */

const DockRoot = styled.div`
  width: 2746px;
  height: 136px;
  flex: none;
  margin: 4px 0 0 97px;
  padding: 18px 0 0 17px;
  display: flex;
  align-items: flex-start;
  border: 2px solid #39414b;
  border-radius: 38px;
  background: linear-gradient(90deg, #161e28, #131a24 50%, #121c26);
`;
const DockGroup = styled.div<{ $ml: number; $gap?: number }>`
  display: flex;
  gap: ${(p) => p.$gap ?? 0}px;
  margin-left: ${(p) => p.$ml}px;
`;
const DockItem = styled.div`
  position: relative;
  width: 86px;
  flex: none;
`;
const RunDot = styled.i`
  display: block;
  width: 8px;
  height: 8px;
  margin: 18px auto 0;
  border-radius: 50%;
  background: #949aa3;
`;
const Badge = styled.div`
  position: absolute;
  left: 57px;
  top: -10px;
  width: 40px;
  height: 40px;
  border-radius: 50%;
  background: #e95140;
  color: #fff;
  font-size: 24px;
  line-height: 40px;
  text-align: center;
`;
const DockSep = styled.i<{ $ml: number }>`
  flex: none;
  width: 2px;
  height: 100px;
  margin: -2px 0 0 ${(p) => p.$ml}px;
  background: #3e4853;
`;
const HiddenDefs = styled.svg`position: absolute;`;

const grads: [string, string, string][] = [
  ["gFinder", "#5cc8fa", "#3567ee"], ["gFinderR", "#f4f4f6", "#cbd5e3"], ["gGrey", "#b9bbc0", "#a6a8ad"], ["gWhite", "#ffffff", "#e4e4e2"],
  ["gSafari", "#3fa4f3", "#3b67e0"], ["gGreen", "#86f07c", "#5bc148"], ["gMail", "#3a6cec", "#5cc4fa"], ["gEnv", "#fdfdfd", "#d6d6d6"],
  ["gCam", "#ffffff", "#c0dfbb"], ["gBubble", "#ffffff", "#b9d8b4"], ["gBrown", "#b0915a", "#94703f"], ["gNotes", "#fbe07a", "#f5c433"], ["gTv", "#2b3531", "#0e1011"],
  ["gMusic", "#ee6377", "#e73841"], ["gPod", "#bb62ee", "#6a2aae"], ["gStore", "#4fb5f0", "#2955d8"], ["gSet", "#d8dfe3", "#8f8b86"],
  ["gTerm", "#c6d4dc", "#77756f"], ["gSteam", "#12204c", "#3c94c6"], ["gTrash", "#8b8e91", "#6f7173"], ["gRed", "#ef6257", "#d9544b"],
];
const Defs = () => (
  <HiddenDefs width="0" height="0">
    <defs>{grads.map(([id, a, b]) => <linearGradient key={id} id={id} x1="0" y1="0" x2="0" y2="1"><stop offset="0" stopColor={a} /><stop offset="1" stopColor={b} /></linearGradient>)}
      <clipPath id="tile"><rect width="86" height="86" rx="20" /></clipPath>
    </defs>
  </HiddenDefs>
);
const Tile = ({ fill, rim = 0.22, children }: { fill: string; rim?: number; children?: React.ReactNode }) => (
  <svg width="86" height="86" viewBox="0 0 86 86"><g clipPath="url(#tile)"><rect width="86" height="86" fill={fill} />{children}</g><rect x=".7" y=".7" width="84.600" height="84.600" rx="19.500" fill="none" stroke="#fff" strokeOpacity={rim} strokeWidth="1.400" /></svg>
);

const Finder = () => (
  <Tile fill="url(#gFinderR)">
    <path d="M0 0h47C40 16 36 34 36 50h13c0 14 1 26 5 36H0z" fill="url(#gFinder)" />
    <path d="M47 0C40 16 36 34 36 50h13c0 14 1 26 5 36" fill="none" stroke="#2b3f60" strokeOpacity=".35" />
    <path d="M22.500 25v7M62.500 25v7" stroke="#2a2e36" strokeWidth="3.600" strokeLinecap="round" />
    <path d="M17 57q26 22 52 0" fill="none" stroke="#15181e" strokeWidth="2.800" strokeLinecap="round" />
  </Tile>
);
const Launchpad = () => (
  <Tile fill="url(#gGrey)">
    {["#6fdd52", "#f4bb35", "#e88a30", "#d83a2e", "#9aa4aa", "#ec4a68", "#9a46d4", "#3a90f2", "#5cc9a4"].map((c, i) => <rect key={c} x={14 + (i % 3) * 21} y={14 + Math.floor(i / 3) * 21} width="16" height="16" rx="4" fill={c} />)}
  </Tile>
);
const SafariIcon = () => (
  <Tile fill="url(#gWhite)">
    <circle cx="43" cy="43" r="36.500" fill="url(#gSafari)" />
    {Array.from({ length: 60 }, (_, i) => <path key={i} d={i % 2 ? "M43 9v3.500" : "M43 9v6"} stroke="#fff" strokeOpacity=".8" strokeWidth="1" transform={`rotate(${i * 6} 43 43)`} />)}
    <path d="M69 21L47.500 46.500 39.500 39z" fill="#ea4e3f" /><path d="M17 65l22.500-26 8 7.500z" fill="#f4f6f8" />
  </Tile>
);
const Messages = () => (
  <Tile fill="url(#gGreen)"><path d="M43 15c18 0 31 11 31 26S61 67 43 67c-5 0-9-.6-13-2-2 3-5 5-8 6 1-3 1.500-6 1-9C15 57 12 50 12 41c0-15 13-26 31-26z" fill="url(#gBubble)" /></Tile>
);
const Mail = () => (
  <Tile fill="url(#gMail)">
    <rect x="12.500" y="24" width="61" height="38" rx="4" fill="url(#gEnv)" />
    <path d="M14 60l21-18M72 60L51 42" stroke="#a9a9a9" strokeWidth="1.200" /><path d="M14 25l25 24q4 3.500 8 0l25-24" fill="#f3f3f3" stroke="#9a9a9a" strokeWidth="1.400" />
  </Tile>
);
const Maps = () => (
  <Tile fill="#7fd06c">
    <path d="M0 12l86 52v22H0z" fill="#eceaf0" /><path d="M0 34l26 14v38H0z" fill="#df86c4" /><path d="M48 86V52l30 34z" fill="#f4c844" /><path d="M20 0h26v86H20z" fill="#e9e9ee" />
    <path d="M60 0a34 34 0 0 0 26 30" fill="none" stroke="#d4d6dc" strokeWidth="8" /><path d="M23 0h20v40H23z" fill="#3d7cf0" />
    <circle cx="33" cy="53" r="20.500" fill="#fff" /><circle cx="33" cy="53" r="17.500" fill="#3576ee" /><path d="M33 40l9.500 24-9.500-5-9.500 5z" fill="#fff" />
  </Tile>
);
const Petal = styled.rect`mix-blend-mode: multiply;`;
const Photos = () => (
  <Tile fill="#fdfdfd">
    {["#f29b38", "#f2dc45", "#b8cf48", "#7cc07c", "#5ea4dd", "#8f86cc", "#cc7cb4", "#ec5a4c"].map((c, i) => <Petal key={c} x="32" y="6" width="22" height="36" rx="11" fill={c} fillOpacity=".88" transform={`rotate(${i * 45} 43 43)`} />)}
  </Tile>
);
const FaceTime = () => (
  <Tile fill="url(#gGreen)"><rect x="13" y="24" width="42" height="38" rx="9" fill="url(#gCam)" /><path d="M57 40l12-12q3.500-3 3.500 1v28q0 4-3.500 1L57 46z" fill="url(#gCam)" /></Tile>
);
const CalendarIcon = () => (
  <Tile fill="#f8f7f5">
    <rect width="86" height="27" fill="url(#gRed)" />
    <text x="43" y="20.500" fontSize="16.500" fontWeight="600" fontFamily="Inter" fill="#fff" textAnchor="middle">SEP</text>
    <text x="43" y="72" fontSize="52" fontWeight="300" fontFamily="Inter" fill="#272727" textAnchor="middle">9</text>
  </Tile>
);
const Contacts = () => (
  <svg width="86" height="86" viewBox="0 0 86 86">
    <rect x="60" y="11" width="29" height="20" rx="5" fill="#a6a7a8" /><rect x="60" y="29" width="29" height="19" fill="#5aaee8" /><rect x="60" y="46" width="29" height="17" fill="#ee9836" /><rect x="60" y="61" width="29" height="15" rx="5" fill="#5cc35a" />
    <rect width="86" height="86" rx="20" fill="url(#gBrown)" /><path d="M5 8v70" stroke="#6f5228" strokeOpacity=".5" strokeWidth="1.500" />
    <circle cx="45" cy="43" r="26.500" fill="none" stroke="#7d5f34" strokeWidth="2" /><circle cx="45" cy="37" r="9.500" fill="#7d5f34" fillOpacity=".75" /><path d="M27 61c3-13 33-13 36 0-10 11-27 11-36 0z" fill="#7d5f34" fillOpacity=".75" />
  </svg>
);
const Reminders = () => (
  <Tile fill="#fbfbfa">
    {["#2f78f2", "#e2443a", "#ee952e"].map((c, i) => <g key={c} transform={`translate(16.500 ${21.500 + i * 21.300})`}><circle r="6.300" fill="none" stroke={c} strokeWidth="1.300" /><circle r="4.300" fill={c} /><path d="M15 0h45" stroke="#b4b4b8" strokeWidth="1.600" /></g>)}
  </Tile>
);
const Notes = () => (
  <Tile fill="#f3f2ef"><rect width="86" height="22" fill="url(#gNotes)" /><path d="M0 22.500h86" stroke="#8e887a" strokeWidth="1.200" /><path d="M2 26h82" stroke="#b8b5ac" strokeWidth="2" strokeDasharray="1.500 2" /><path d="M0 43h86M0 64h86" stroke="#cfcdca" strokeWidth="1.500" /></Tile>
);
const TvIcon = () => (
  <Tile fill="url(#gTv)" rim={0.06}><g transform="translate(10 25)"><FaApple size={31} color="#fff" /></g><text x="56" y="56" fontSize="34" fontWeight="500" letterSpacing="-1" fontFamily="Inter" fill="#fff" textAnchor="middle">tv</text></Tile>
);
const Music = () => (
  <Tile fill="url(#gMusic)"><path d="M31 22q0-3 3-3.500l25-5q4-.7 4 3v39c0 6-3 9-8.500 9S46 61 46 57.500c0-5 4-7 9-7.700 2-.3 3-1 3-3V28l-21 4.500V61c0 6-3.500 10-9.500 10S18 67 18 63.500c0-5 4-7 9-7.500 3-.4 4-1 4-3z" fill="#fff" /></Tile>
);
const Podcasts = () => (
  <Tile fill="url(#gPod)">
    <g fill="none" stroke="#fff" strokeWidth="3.600" strokeLinecap="round"><path d="M31 66a29 29 0 1 1 24 0" /><path d="M31 52a17.500 17.500 0 1 1 24 0" /></g>
    <circle cx="43" cy="37.500" r="7" fill="#fff" /><path d="M36 53c0-6 14-6 14 0l-2.500 19c-.6 4.500-8.400 4.500-9 0z" fill="#fff" />
  </Tile>
);
const AppStore = () => (
  <Tile fill="url(#gStore)"><g stroke="#fff" strokeWidth="7" strokeLinecap="round"><path d="M46 19L26 52M38 19l27 47M16 53h31M61 53h9M21.500 62.500L20.500 65" /></g></Tile>
);
const Settings = () => (
  <Tile fill="url(#gSet)">
    <circle cx="43" cy="43" r="37" fill="#3b3c3d" /><circle cx="43" cy="43" r="32" fill="none" stroke="#a9aaab" strokeWidth="4" strokeDasharray="2 1.500" /><circle cx="43" cy="43" r="27" fill="#6c6d6e" stroke="#c0c2c4" strokeWidth="2" /><circle cx="43" cy="43" r="18" fill="#47484a" stroke="#b2b4b6" strokeWidth="3.500" />
    <g stroke="#b9bbbd" strokeWidth="4"><path d="M43 43h27M43 43L29.500 20M43 43L29.500 66" /></g><circle cx="43" cy="43" r="4" fill="#555" />
  </Tile>
);
const Terminal = () => (
  <Tile fill="url(#gTerm)"><rect x="3.500" y="3.500" width="79" height="79" rx="17" fill="#050505" /><rect x="9" y="9.500" width="68" height="67" rx="11" fill="#262626" /><path d="M15 17l9 5-9 6.500" fill="none" stroke="#fff" strokeWidth="3" /><path d="M29 32.500h13" stroke="#fff" strokeWidth="3" /></Tile>
);
const Outlook = () => (
  <Tile fill="#fdfdfd">
    <rect x="25" y="14" width="45" height="42" rx="2" fill="#2a72c9" /><rect x="25" y="14" width="45" height="8" fill="#20509c" /><rect x="40" y="22" width="15" height="13" fill="#3d9fe6" /><rect x="55" y="22" width="15" height="13" fill="#62c6f4" /><rect x="55" y="35" width="15" height="13" fill="#3d9fe6" />
    <path d="M23 46l24 14 24-14v22q0 3-3 3H26q-3 0-3-3z" fill="#50b0ec" /><path d="M40 50h22L50 58z" fill="#276bbd" /><path d="M25 71l22-13 24 10q0 3-3 3z" fill="#4a9be6" />
    <rect x="8" y="26" width="32" height="32" rx="3" fill="#235fc0" /><text x="24" y="49" fontSize="20" fontWeight="700" fontFamily="Inter" fill="#fff" textAnchor="middle">O</text>
  </Tile>
);
const TextEdit = () => (
  <svg width="86" height="86" viewBox="0 0 86 86">
    <rect width="86" height="86" rx="20" fill="#fafafa" /><path d="M0 22h86M0 32.500h86M0 43h86M0 53.500h86M0 64h86M4 74.500h78" stroke="#c1c1c3" strokeWidth="1.300" /><path d="M15 1v84" stroke="#efaaa4" strokeWidth="1.200" />
    <path d="M74-6q4-6 8-2l1 6-23 66-12 20-13 6 3-10 10-20z" fill="#8d98a4" />
    <path d="M76-6q2-4 4-2l-24 70-6 4z" fill="#dbe6f0" /><path d="M78 4l2 1-14 28" fill="none" stroke="#56616d" strokeWidth="1.500" />
    <path d="M48 46l12 4-10 26-14 13 2-16z" fill="#a9adb1" /><path d="M52 48l5 2-11 26-9 11z" fill="#e3e4e6" />
  </svg>
);
const Chrome = () => (
  <Tile fill="#f3f3f2">
    <circle cx="43" cy="43" r="36.500" fill="#d94a3d" /><path d="M11.400 24.700A36.500 36.500 0 0 0 43 79.500L59 52 43 43 27 52z" fill="#4a9c50" /><path d="M74.600 24.700H43V43l16 9-16 27.500A36.500 36.500 0 0 0 74.600 24.700z" fill="#f2bd42" />
    <circle cx="43" cy="43" r="18" fill="#fff" /><circle cx="43" cy="43" r="14.500" fill="#3f74e4" />
  </Tile>
);
const Steam = () => (
  <svg width="86" height="86" viewBox="0 0 86 86">
    <defs><clipPath id="steamClip"><circle cx="43" cy="43" r="48" /></clipPath></defs>
    <circle cx="43" cy="43" r="48" fill="url(#gSteam)" />
    <g clipPath="url(#steamClip)">
      <path d="M-6 38L20 50q6-3 11-1L42 34Q41 13 59 12.500q18 1 18.500 18.500Q77 49 60 50L42 63q-1 12-14 12-11-1-13-11L-6 56z" fill="#d9dce2" />
      <circle cx="59" cy="31" r="12.500" fill="#1c3168" /><circle cx="59" cy="31" r="9" fill="#c3c8d2" />
      <path d="M18 66a10.500 10.500 0 1 0 7-13.500" fill="none" stroke="#2b5a92" strokeWidth="2.800" />
    </g>
  </svg>
);
const Trash = () => (
  <svg width="76" height="86" viewBox="0 0 76 86">
    <path d="M4 8l10-12 6 5 8-9 10 6 9-6 8 8 9-4 8 13-6 10H8z" fill="#dedfe0" /><path d="M18 2l8 9-6 6M40-3l-6 12 9 6M52 0l6 11-9 5" fill="none" stroke="#84878a" strokeWidth="2" /><path d="M26 4l12 3-4 7-10-2z" fill="#4fb8d8" /><path d="M45 4l10 5-5 6z" fill="#c0563c" />
    <path d="M0 4q2 12 38 12T76 4l-9 77q-2 9-29 9T9 81z" fill="url(#gTrash)" fillOpacity=".94" /><path d="M12 20l8 62M64 20l-7 60" stroke="#bfc1c3" strokeOpacity=".25" strokeWidth="5" /><ellipse cx="38" cy="80" rx="25" ry="6" fill="#b2b4b6" fillOpacity=".4" />
  </svg>
);

type Entry = [React.FC, boolean?, string?];
const mainApps: Entry[] = [[Finder, true], [Launchpad], [SafariIcon, true], [Messages, true], [Mail], [Maps], [Photos], [FaceTime], [CalendarIcon], [Contacts], [Reminders, false, "6"], [Notes, true], [TvIcon], [Music], [Podcasts], [AppStore], [Settings, false, "1"]];
const moreApps: Entry[] = [[Terminal, true], [Outlook, true], [TextEdit], [Chrome, true], [Steam, true]];

const renderApps = (list: Entry[]) => list.map(([App, running, badge], i) => (
  <DockItem key={i}><App />{badge && <Badge>{badge}</Badge>}{running && <RunDot />}</DockItem>
));

const Dock = () => (
  <DockRoot>
    <Defs />
    <DockGroup $ml={0} $gap={28.4}>{renderApps(mainApps)}</DockGroup>
    <DockSep $ml={42} />
    <DockGroup $ml={37.5} $gap={28.2}>{renderApps(moreApps)}</DockGroup>
    <DockSep $ml={42} />
    <DockGroup $ml={42}><Trash /></DockGroup>
  </DockRoot>
);

/* ---------- screenshot preview floating over the desktop ---------- */

const PreviewFrame = styled.div`
  position: absolute;
  left: 2606px;
  top: 1531px;
  width: 310px;
  height: 207px;
  padding: 7px 8px;
  border-radius: 10px;
  background: #000;
  box-shadow: 0 0 40px rgba(0, 0, 0, 0.25);
`;
const PreviewImage = styled.div`
  position: relative;
  width: 294px;
  height: 192px;
  overflow: hidden;
  &::after { content: ""; position: absolute; inset: 0; border: 1px solid #f4f4f4; }
`;
const PreviewScale = styled.div`
  width: 2940px;
  height: 1912px;
  transform: scale(0.1);
  transform-origin: 0 0;
`;

const EditorBody = styled.div`flex: 1; display: flex; min-height: 0;`;

function Desktop({ mini }: { mini?: boolean }) {
  return (
    <Screen>
      <MenuBar />
      <BrowserWindow>
        <BrowserChrome />
        <EditorHeader />
        <Toolbar zoom={mini ? "70%" : "100%"} />
        <EditorBody>
          <ShapePanel />
          <Canvas mini={mini} />
          <FormatPanel />
        </EditorBody>
      </BrowserWindow>
      <BackWindowEdge />
      <Dock />
      {!mini && (
        <PreviewFrame><PreviewImage><PreviewScale><Desktop mini /></PreviewScale></PreviewImage></PreviewFrame>
      )}
    </Screen>
  );
}

export default function App() {
  return (
    <>
      <Global />
      <Desktop />
    </>
  );
}
